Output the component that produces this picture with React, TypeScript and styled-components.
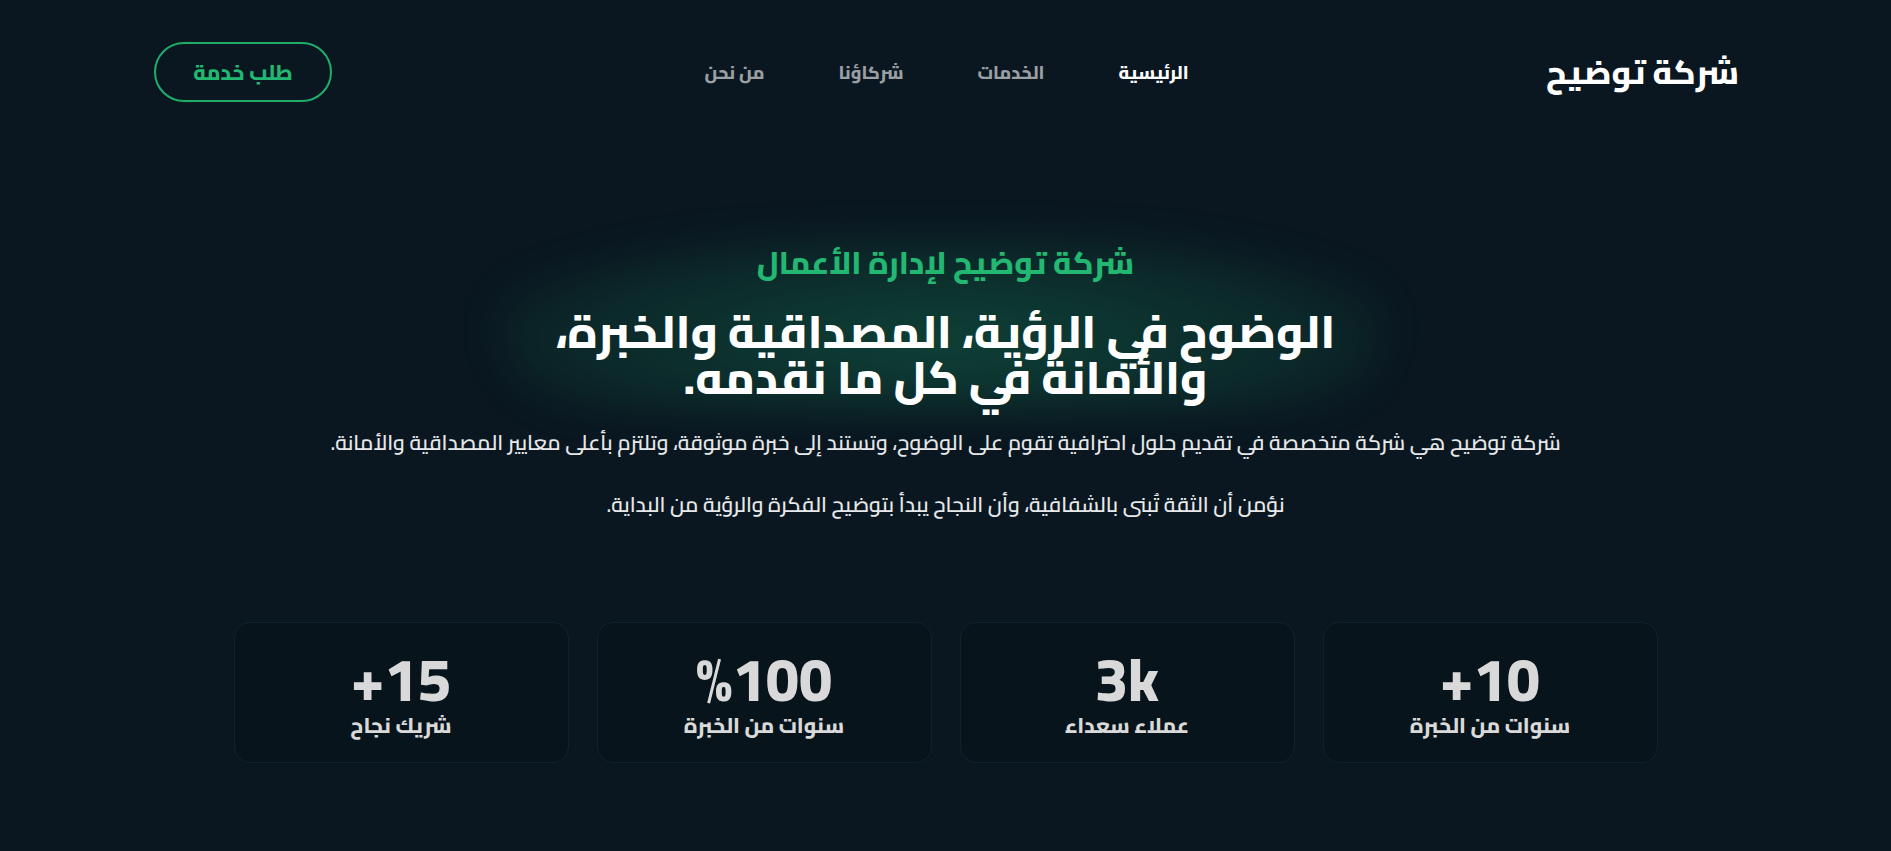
import React from 'react';
import styled, { createGlobalStyle } from 'styled-components';

const GlobalStyle = createGlobalStyle`
  * { box-sizing: border-box; }
  html, body {
    margin: 0;
    padding: 0;
    background: #0a1720;
  }
  body {
    font-family: Cairo, "Noto Sans Arabic", "DejaVu Sans", sans-serif;
    color: #ffffff;
  }
`

const Page = styled.div`
  min-height: 851px;
  background: #0a1720;
  overflow: hidden;
`

const Header = styled.header`
  display: grid;
  grid-template-columns: 1fr auto 1fr;
  align-items: center;
  padding: 42px 152px 0 154px;
  height: 102px;
`

const Logo = styled.div`
  font-size: 33px;
  font-weight: 800;
  line-height: 1;
  color: #ffffff;
  justify-self: start;
`

const Nav = styled.nav`
  display: flex;
  gap: 74px;
  align-items: center;
`

const NavLink = styled.a<{ $active?: boolean }>`
  font-size: 18px;
  font-weight: 800;
  text-decoration: none;
  color: ${p => (p.$active ? '#ffffff' : '#9a9fa3')};
  cursor: pointer;
`

const CtaButton = styled.button`
  justify-self: end;
  width: 178px;
  height: 60px;
  border-radius: 30px;
  border: 2px solid #1fae6a;
  background: transparent;
  color: #22b872;
  font-family: inherit;
  font-size: 21px;
  font-weight: 800;
  cursor: pointer;
`

const Hero = styled.section`
  display: flex;
  flex-direction: column;
  align-items: center;
  text-align: center;
  padding-top: 141px;
`

const HeroHead = styled.div`
  position: relative;
  isolation: isolate;
  display: flex;
  flex-direction: column;
  align-items: center;

  /* soft green glow sitting behind the heading block */
  &::before {
    content: '';
    position: absolute;
    z-index: -1;
    left: -60px;
    right: -50px;
    top: -8px;
    bottom: -10px;
    border-radius: 80px;
    background: radial-gradient(ellipse at 50% 60%, rgba(20, 125, 88, 0.42), rgba(20, 110, 80, 0.2) 60%, rgba(20, 110, 80, 0) 80%);
    filter: blur(18px);
  }
`

const Kicker = styled.div`
  font-size: 31px;
  line-height: 40px;
  font-weight: 800;
  color: #22b872;
`

const Title = styled.h1`
  margin: 25px 0 0;
  font-size: 46px;
  line-height: 46px;
  font-weight: 800;
  color: #ffffff;
`

const Lead = styled.p<{ $gap: number }>`
  margin: ${p => p.$gap}px 0 0;
  font-size: 21px;
  line-height: 30px;
  font-weight: 600;
  color: #e6e8ea;
`

const Stats = styled.div`
  display: grid;
  grid-template-columns: repeat(4, 335px);
  gap: 28px;
  justify-content: center;
  margin-top: 102px;
`

const StatCard = styled.div`
  height: 141px;
  border-radius: 16px;
  border: 1px solid #0f222c;
  background: #08141b;
  display: flex;
  flex-direction: column;
  align-items: center;
  justify-content: center;
  gap: 4px;
  padding-top: 4px;
`

const StatValue = styled.div`
  font-size: 60px;
  font-weight: 800;
  line-height: 58px;
  color: #d9d9d9;
`

const StatLabel = styled.div`
  font-size: 21px;
  font-weight: 800;
  line-height: 28px;
  color: #d9d9d9;
`

const stats = [
  { value: '10+', label: 'سنوات من الخبرة' },
  { value: '3k', label: 'عملاء سعداء' },
  { value: '%100', label: 'سنوات من الخبرة' },
  { value: '15+', label: 'شريك نجاح' },
];

export default function App() {
  return (
    <Page dir="rtl">
      <GlobalStyle />
      <Header>
        <Logo>شركة توضيح</Logo>
        <Nav>
          <NavLink $active>الرئيسية</NavLink>
          <NavLink>الخدمات</NavLink>
          <NavLink>شركاؤنا</NavLink>
          <NavLink>من نحن</NavLink>
        </Nav>
        <CtaButton>طلب خدمة</CtaButton>
      </Header>

      <Hero>
        <HeroHead>
          <Kicker>شركة توضيح لإدارة الأعمال</Kicker>
          <Title>
            الوضوح في الرؤية، المصداقية والخبرة،
            <br />
            والأمانة في كل ما نقدمه.
          </Title>
        </HeroHead>
        <Lead $gap={28}>
          شركة توضيح هي شركة متخصصة في تقديم حلول احترافية تقوم على الوضوح، وتستند إلى خبرة موثوقة، وتلتزم بأعلى معايير المصداقية والأمانة.
        </Lead>
        <Lead $gap={32}>
          نؤمن أن الثقة تُبنى بالشفافية، وأن النجاح يبدأ بتوضيح الفكرة والرؤية من البداية.
        </Lead>
      </Hero>

      <Stats>
        {stats.map((s, i) => (
          <StatCard key={i}>
            <StatValue>{s.value}</StatValue>
            <StatLabel>{s.label}</StatLabel>
          </StatCard>
        ))}
      </Stats>
    </Page>
  );
}
